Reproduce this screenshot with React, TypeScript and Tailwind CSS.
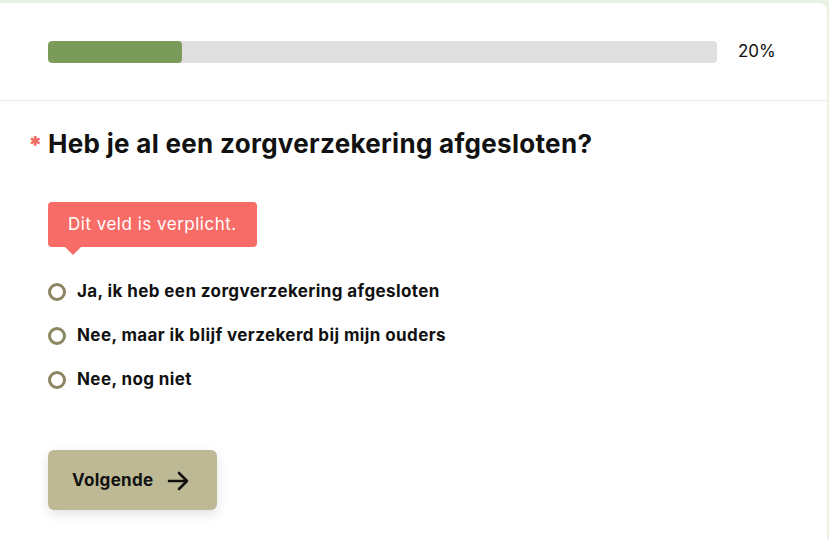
import React from "react";

const options = [
  "Ja, ik heb een zorgverzekering afgesloten",
  "Nee, maar ik blijf verzekerd bij mijn ouders",
  "Nee, nog niet",
];

export default function App() {
  return (
    <div
      className="w-[829px] h-[540px] bg-[#eaf2e3] pt-[3px] overflow-hidden"
      style={{ fontFamily: "Inter, 'Liberation Sans', sans-serif" }}
    >
      <div className="w-[827px] h-[600px] bg-white rounded-tr-[8px]">
        <div className="flex items-center pl-[48px] pr-[51px] h-[98px] border-b border-[#e9e9e9]">
          <div className="flex-1 h-[22px] bg-[#e0e0e0] rounded-[4px] overflow-hidden">
            <div className="h-full w-[20%] bg-[#7b9b5a] rounded-[4px]" />
          </div>
          <div className="ml-[21px] w-[38px] text-[17px] text-[#111] leading-none">20%</div>
        </div>

        <div className="flex items-center pl-[28px] mt-[27px] h-[32px]">
          <span className="w-[20px] text-[#f56d62] text-[24px] font-black leading-none mt-[4px]">*</span>
          <h1 className="text-[26px] font-bold text-[#111] leading-none tracking-[0.3px]">
            Heb je al een zorgverzekering afgesloten?
          </h1>
        </div>

        <div className="pl-[48px] mt-[42px]">
          <div className="relative inline-flex items-center h-[45px] px-[20px] bg-[#f86c67] rounded-[4px] text-white text-[17px] tracking-[0.5px]">
            Dit veld is verplicht.
            <span className="absolute left-[17px] top-full w-0 h-0 border-l-[8px] border-r-[8px] border-t-[8px] border-l-transparent border-r-transparent border-t-[#f86c67]" />
          </div>
        </div>

        <div className="pl-[48px] mt-[35px] flex flex-col gap-[24px]">
          {options.map((o) => (
            <label key={o} className="flex items-center h-[20px]">
              <span className="w-[18px] h-[18px] rounded-full border-[3px] border-[#8b8660] mr-[11px]" />
              <span className="text-[17px] font-bold text-[#111] tracking-[0.4px]">{o}</span>
            </label>
          ))}
        </div>

        <div className="pl-[48px] mt-[60px]">
          <button className="flex items-center w-[169px] h-[60px] pl-[24px] pt-[2px] bg-[#bdb995] rounded-[6px] shadow-[0_4px_12px_rgba(0,0,0,0.12)] text-[17px] font-bold text-[#111] tracking-[0.3px]">
            Volgende
            <svg className="ml-[13px]" width="24" height="24" viewBox="0 0 24 24" fill="none" stroke="#111" strokeWidth="2.6" strokeLinecap="round" strokeLinejoin="round">
              <path d="M3 12h18M13 4l8 8-8 8" />
            </svg>
          </button>
        </div>
      </div>
    </div>
  );
}
